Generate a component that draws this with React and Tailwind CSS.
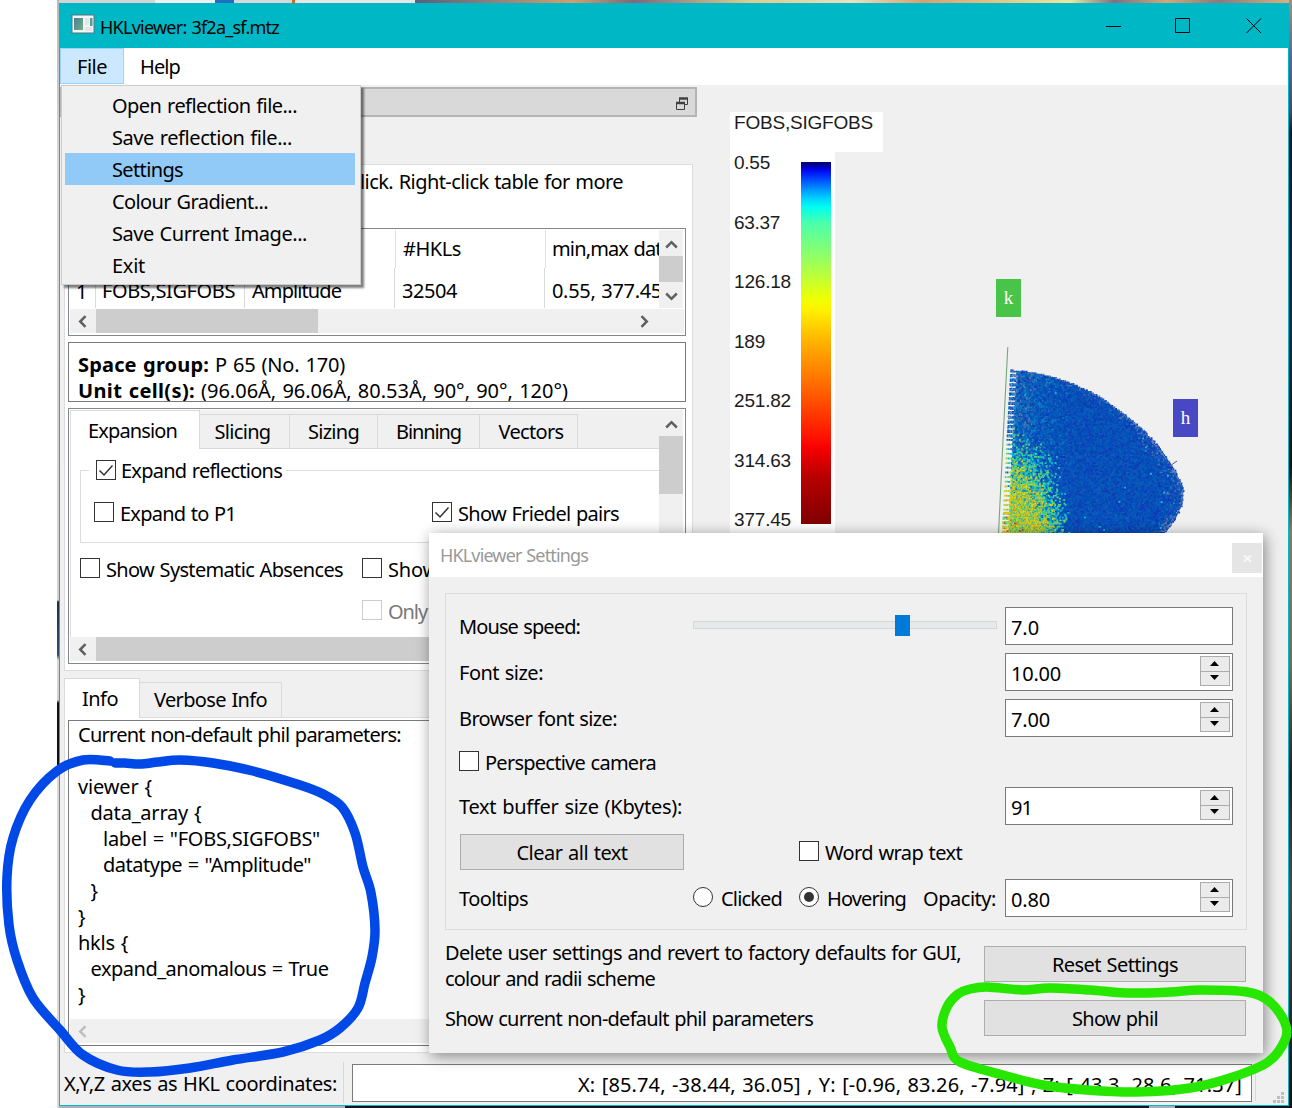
import React, { useLayoutEffect, useMemo, useRef, useState } from "react";

/* Text run whose tracking is adjusted so that it spans a given width. */
function T({ w, flat, className = "", children }) {
  const ref = useRef(null);
  const [gap, setGap] = useState(0);
  useLayoutEffect(() => {
    const el = ref.current;
    el.style.letterSpacing = "0px";
    const natural = el.getBoundingClientRect().width;
    if (w) setGap((w - natural) / el.textContent.length);
  }, [w]);
  return (
    <span
      ref={ref}
      className={`inline-block whitespace-pre [word-spacing:1px] ${flat ? "" : "translate-y-px"} ${className}`}
      style={{ letterSpacing: `${gap}px` }}
    >
      {children}
    </span>
  );
}

function smooth(points, closed) {
  const n = points.length;
  const at = (i) => (closed ? points[(i + n) % n] : points[Math.max(0, Math.min(n - 1, i))]);
  let d = `M${points[0][0]} ${points[0][1]}`;
  for (let i = 0; i < (closed ? n : n - 1); i++) {
    const [p0, p1, p2, p3] = [at(i - 1), at(i), at(i + 1), at(i + 2)];
    d += `C${p1[0] + (p2[0] - p0[0]) / 6} ${p1[1] + (p2[1] - p0[1]) / 6} ${p2[0] - (p3[0] - p1[0]) / 6} ${p2[1] - (p3[1] - p1[1]) / 6} ${p2[0]} ${p2[1]}`;
  }
  return d;
}

function Chevron({ dir, color = "#606060" }) {
  const d = {
    up: "M1.2 8.5 6.5 3.2l5.3 5.3",
    down: "M1.2 4.5 6.5 9.8l5.3-5.3",
    left: "M9.5 1.2 4.2 6.5l5.3 5.3",
    right: "M3.5 1.2 8.8 6.5l-5.3 5.3",
  }[dir];
  return (
    <svg width="13" height="13" viewBox="0 0 13 13" className="block">
      <path d={d} fill="none" stroke={color} strokeWidth="2.5" />
    </svg>
  );
}

function Check({ on, disabled }) {
  return (
    <span className={`flex h-5 w-5 shrink-0 items-center justify-center border bg-white ${disabled ? "border-[#cccccc]" : "border-[#333333]"}`}>
      {on && (
        <svg width="18" height="18" viewBox="0 0 18 18">
          <path d="M2.5 9.5 7 14 15.5 4.500" fill="none" stroke="#333" strokeWidth="1.5" />
        </svg>
      )}
    </span>
  );
}

function Radio({ on }) {
  return (
    <span className="flex h-5 w-5 shrink-0 items-center justify-center rounded-full border border-[#333333] bg-white">
      {on && <span className="h-2.5 w-2.5 rounded-full bg-[#333333]" />}
    </span>
  );
}

function Tab({ active, className, children }) {
  return (
    <div className={`flex items-center justify-center ${active ? "border-x border-t border-[#d9d9d9] bg-white" : "mt-1 border border-l-0 border-[#d9d9d9] bg-[#f0f0f0]"} ${className}`}>
      {children}
    </div>
  );
}

function Spin() {
  return (
    <div className="mr-0.5 mt-0.5 flex h-[30px] w-[30px] flex-col border border-[#acacac] bg-[#ebebeb]">
      <div className="flex h-[15px] justify-center border-b border-[#acacac] pr-px pt-1">
        <svg width="9" height="5" viewBox="0 0 9 5"><path d="M0 5 4.5 0 9 5Z" /></svg>
      </div>
      <div className="flex h-[13px] justify-center pr-px pt-[3px]">
        <svg width="9" height="5" viewBox="0 0 9 5"><path d="M0 0 4.5 5 9 0Z" /></svg>
      </div>
    </div>
  );
}

function Field({ value, w, spin }) {
  return (
    <div className="flex h-[38px] w-[228px] justify-between border border-[#7a7a7a] bg-white pl-[5px]">
      <div className="pt-[7px]"><T flat w={w}>{value}</T></div>
      {spin && <Spin />}
    </div>
  );
}

function Btn({ className, children }) {
  return (
    <div className={`flex h-9 items-center justify-center border border-[#adadad] bg-[#e1e1e1] ${className}`}>{children}</div>
  );
}

const MENU = [
  ["Open reflection file...", 185],
  ["Save reflection file...", 180],
  ["Settings", 71],
  ["Colour Gradient...", 156],
  ["Save Current Image...", 195],
  ["Exit", 33],
];

function FileMenu() {
  return (
    <div className="absolute left-[61px] top-[85px] z-10 h-[200px] w-[300px] border border-[#cccccc] bg-[#f0f0f0] pl-[3px] pt-[3px] shadow-[3px_3px_2px_rgba(0,0,0,0.5)]">
      {MENU.map(([label, w], i) => (
        <div key={label} className={`flex h-8 w-[290px] items-center pl-[47px] ${i === 2 ? "bg-[#91c9f7]" : ""}`}>
          <T w={w}>{label}</T>
        </div>
      ))}
    </div>
  );
}

const OUTLINE = [
  [369, 1012], [371, 1030], [373, 1041], [377, 1056], [382, 1070], [390, 1089], [400, 1106], [412, 1122],
  [429, 1143], [442, 1155], [458, 1167], [472, 1176], [485, 1182], [495, 1183], [505, 1181], [513, 1177], [523, 1171], [534, 1162],
];

function rightEdge(y) {
  for (let i = 1; i < OUTLINE.length; i++) {
    const [y0, x0] = OUTLINE[i - 1];
    const [y1, x1] = OUTLINE[i];
    if (y <= y1) return x0 + ((x1 - x0) * (y - y0)) / (y1 - y0);
  }
  return 1162;
}

/* Reflections drawn as a lattice of small coloured spots, grouped by colour. */
function Reflections() {
  const layers = useMemo(() => {
    let seed = 91;
    const rnd = () => {
      seed = (seed * 1664525 + 1013904223) >>> 0;
      return seed / 4294967296;
    };
    const groups = {};
    const put = (c, x, y, s) => {
      groups[c] = (groups[c] || "") + `M${x.toFixed(1)} ${y.toFixed(1)}h${s}v${s}h-${s}z`;
    };
    const deep = ["#0644b0", "#0650b8", "#0a46c0", "#0058b8", "#0a5abe", "#0b54ac", "#1038b8", "#0862c0"];
    const mid = ["#0070c4", "#0a62be", "#0878c4", "#2a74b8", "#0060b8", "#1484c8"];
    const edge = ["#3c64b4", "#4870b4", "#2048b8", "#1a38b4", "#5c7cb0"];
    const aqua = ["#00c0c8", "#20d0b8", "#18a8d0", "#48d090"];
    const warm = ["#70d068", "#a8d838", "#d8d818", "#48d090", "#e0c010", "#c0d030"];
    const hot = ["#e88010", "#d84010", "#f0a010"];
    const pick = (a) => a[Math.floor(rnd() * a.length)];
    for (let y = 369; y < 534; y += 1.55) {
      const left = 1010 - (y - 369) * 0.052;
      const right = rightEdge(y);
      const comb = Math.floor((y - 369) / 2.3) % 2 === 0;
      for (let x = left + (comb ? 0 : 6); x < right; x += 1.7) {
        const dx = (x - 1003) / 57;
        const dy = (538 - y) / 92;
        const heat = Math.exp(-Math.pow(dx * dx + dy * dy, 1.6)) + (rnd() - 0.5) * 0.45;
        const rim = Math.min(right - x, 30) / 30;
        let c;
        if (heat > 1.14 && rnd() < 0.6) c = pick(hot);
        else if (heat > 0.66) c = pick(warm);
        else if (heat > 0.36) c = pick(aqua.concat(warm.slice(0, 1), mid.slice(0, 2)));
        else if (rnd() < 0.002) c = "#10c0d0";
        else if (rnd() > rim + 0.4 || (x < left + 24 && rnd() < 0.3)) c = pick(edge);
        else if (rnd() < 0.85 - (x - left) / 75) c = pick(mid);
        else c = pick(deep);
        put(c, x + rnd() * 0.6, y + rnd() * 0.4, 1.8);
      }
    }
    return Object.entries(groups);
  }, []);
  const base = `M1018 371${OUTLINE.slice(1).map(([y, x]) => `L${x - 2} ${y + 1}`).join("")}L1009 534Z`;
  return (
    <svg width="230" height="200" viewBox="985 340 230 200" className="absolute left-[288px] top-[255px]">
      <path d={base} fill="#0a5ab8" />
      {layers.map(([c, d]) => <path key={c} d={d} fill={c} />)}
      <path d="M1007.8 347 1003 440 998.5 534" fill="none" stroke="#74a878" strokeWidth="1.1" />
      <path d="M1170.5 465.5 1177 461" stroke="#5a508c" strokeWidth="1" />
    </svg>
  );
}

const SCALE = [["0.55", 36], ["63.37", 46], ["126.18", 57], ["189", 31], ["251.82", 57], ["314.63", 57], ["377.45", 57]];

function Viewer() {
  return (
    <div className="relative w-[591px] pl-[33px] pt-[27px] text-[#1c1c1c]">
      <div className="h-10 w-[153px] bg-white pl-1 font-['Liberation_Sans',sans-serif] text-[19px] leading-[21px]">
        <T flat w={139}>FOBS,SIGFOBS</T>
      </div>
      <div className="flex h-[400px] w-[105px] bg-white pl-1 font-['Liberation_Sans',sans-serif] text-[19px]">
        <div className="w-[67px]">
          {SCALE.map(([s, w]) => <div key={s} className="h-[59.5px] leading-[21px]"><T flat w={w}>{s}</T></div>)}
        </div>
        <div className="mt-2.5 h-[362px] w-[30px] bg-[linear-gradient(#000080_0%,#000090_1%,#0000f0_2%,#0050ff_5%,#00a0ff_8%,#00d0ff_10%,#00ffee_12.5%,#4dffaa_17%,#a0ff58_28%,#f0ff00_38%,#fff000_41%,#ffb000_50%,#ff6800_62%,#ff1800_75%,#f80000_79%,#b80000_87%,#800000_100%)]" />
      </div>
      <Reflections />
      <div className="absolute left-[299px] top-[194px] flex h-[38px] w-[25px] items-center justify-center bg-[#48c548] font-['Liberation_Serif',serif] text-[19px] text-white">k</div>
      <div className="absolute left-[476px] top-[314px] flex h-[38px] w-[25px] items-center justify-center bg-[#4848c5] font-['Liberation_Serif',serif] text-[19px] text-white">h</div>
    </div>
  );
}

function DataPanel() {
  return (
    <div className="ml-1 mt-[47px] h-[507px] w-[629px] border border-[#dcdcdc] bg-white pl-[3px]">
      <div className="flex h-[63px] pl-[292px] pt-[3px]"><T w={263}>lick. Right-click table for more</T></div>

      <div className="flex h-[108px] w-[618px] flex-col border border-[#828790] bg-white pt-px">
        <div className="flex h-[78px]">
          <div className="flex w-[590px] flex-col overflow-hidden">
            <div className="flex h-[38px] shrink-0">
              <div className="w-[177px] shrink-0 border-r border-[#e0e0e0]" />
              <div className="w-[150px] shrink-0 border-r border-[#e0e0e0]" />
              <div className="w-[150px] shrink-0 border-r border-[#e0e0e0] pl-[7px] pt-[5px]"><T w={58}>#HKLs</T></div>
              <div className="shrink-0 pl-[6px] pt-[5px]"><T w={120}>min,max data</T></div>
            </div>
            <div className="flex h-10 shrink-0">
              <div className="w-[27px] shrink-0 border-r border-[#d9d9d9] pl-[7px] pt-[11px]">1</div>
              <div className="w-[149px] shrink-0 border-r border-[#d9d9d9] pl-[6px] pt-[9px]"><T w={133}>FOBS,SIGFOBS</T></div>
              <div className="w-[150px] shrink-0 border-r border-[#d9d9d9] pl-[7px] pt-[9px]"><T w={89}>Amplitude</T></div>
              <div className="w-[150px] shrink-0 border-r border-[#d9d9d9] pl-[7px] pt-[9px]"><T w={55}>32504</T></div>
              <div className="shrink-0 pl-[7px] pt-[9px]"><T w={110}>0.55, 377.45</T></div>
            </div>
          </div>
          <div className="flex w-6 shrink-0 flex-col items-center bg-[#f0f0f0]">
            <div className="flex h-[26px] items-center pt-1"><Chevron dir="up" /></div>
            <div className="h-[26px] w-6 bg-[#cdcdcd]" />
            <div className="flex h-[26px] items-center"><Chevron dir="down" /></div>
          </div>
        </div>
        <div className="ml-px mt-px flex h-6 w-[614px] items-center justify-between bg-[#f0f0f0]">
          <div className="flex h-6 items-center">
            <div className="w-[26px] pl-[6px]"><Chevron dir="left" /></div>
            <div className="h-6 w-[222px] bg-[#cdcdcd]" />
          </div>
          <div className="pr-[33px]"><Chevron dir="right" /></div>
        </div>
      </div>

      <div className="mt-1.5 h-[60px] w-[618px] overflow-hidden border border-[#7a7a7a] bg-white pl-[9px] pt-[8px]">
        <div className="h-[26px]"><T w={131} className="font-bold">Space group:</T><T w={6}> </T><T w={130}>P 65 (No. 170)</T></div>
        <div className="h-[26px]"><T w={117} className="font-bold">Unit cell(s):</T><T w={6}> </T><T w={367}>(96.06Å, 96.06Å, 80.53Å, 90°, 90°, 120°)</T></div>
      </div>

      <div className="mt-1.5 flex h-[256px] w-[618px] flex-col border border-[#828790] bg-white px-px pt-px">
        <div className="flex h-[227px]">
          <div className="w-[589px] overflow-hidden border-l border-[#dcdcdc]">
            <div className="flex h-[39px] bg-[#f0f0f0]">
              <Tab active className="w-[129px] border-l-0 pr-[5px]"><T w={89}>Expansion</T></Tab>
              <Tab className="w-[90px] pr-1"><T flat w={56}>Slicing</T></Tab>
              <Tab className="w-[88px]"><T flat w={51}>Sizing</T></Tab>
              <Tab className="w-[102px]"><T flat w={65}>Binning</T></Tab>
              <Tab className="w-[98px] pl-[5px]"><T flat w={65}>Vectors</T></Tab>
              <div className="grow border-b border-[#d9d9d9]" />
            </div>
            <div className="relative ml-[9px] mt-[21px] h-[73px] w-[620px] border border-[#dcdcdc]">
              <div className="absolute -top-[14px] left-2 flex h-[26px] items-center gap-[5px] bg-white pl-[7px] pr-1">
                <Check on /><T w={161}>Expand reflections</T>
              </div>
              <div className="flex pl-[13px] pt-[31px]">
                <div className="flex w-[338px] gap-1.5"><Check /><T w={116} className="-mt-0.5">Expand to P1</T></div>
                <div className="flex gap-1.5"><Check on /><T w={161} className="-mt-0.5">Show Friedel pairs</T></div>
              </div>
            </div>
            <div className="mt-[12px] flex h-[26px] items-center pl-[9px]">
              <div className="flex w-[282px] items-center gap-1.5"><Check /><T w={237} className="pt-0.5">Show Systematic Absences</T></div>
              <div className="flex items-center gap-1.5"><Check /><T w={50} className="pt-0.5">Show</T></div>
            </div>
            <div className="mt-4 flex h-[26px] items-center gap-1.5 pl-[291px] text-[#787878]"><Check disabled /><T w={39} className="pt-0.5">Only</T></div>
          </div>
          <div className="flex w-6 flex-col items-center bg-[#f0f0f0]">
            <div className="flex h-[26px] items-center pt-1"><Chevron dir="up" /></div>
            <div className="h-[58px] w-6 bg-[#cdcdcd]" />
          </div>
        </div>
        <div className="flex h-6 w-[589px] items-center bg-[#f0f0f0]">
          <div className="w-[26px] pl-[6px]"><Chevron dir="left" /></div>
          <div className="h-6 grow bg-[#cdcdcd]" />
        </div>
      </div>
    </div>
  );
}

const PHIL = [
  ["Current non-default phil parameters:", 323, ""],
  ["", 0, ""],
  ["viewer {", 74, ""],
  ["data_array {", 111, "pl-[12.500px]"],
  ['label = "FOBS,SIGFOBS"', 217, "pl-[25px]"],
  ['datatype = "Amplitude"', 208, "pl-[25px]"],
  ["}", 10, "pl-[12.500px]"],
  ["}", 10, ""],
  ["hkls {", 50, ""],
  ["expand_anomalous = True", 238, "pl-[12.500px]"],
  ["}", 10, ""],
];

function InfoPanel() {
  return (
    <div className="ml-1 mt-[7px] w-[629px]">
      <div className="flex h-[39px]">
        <Tab active className="-mb-px w-[76px] pr-1"><T flat w={36}>Info</T></Tab>
        <Tab className="w-[142px] border-b-0"><T flat w={113}>Verbose Info</T></Tab>
      </div>
      <div className="h-[336px] border border-[#dcdcdc] bg-white pl-[3px] pt-0.5">
        <div className="h-[326px] w-[618px] border border-[#7a7a7a] bg-white">
          <div className="h-[298px] pl-[9px]">
            {PHIL.map(([line, w, pad], i) => <div key={i} className={`h-[26px] ${pad}`}>{line && <T w={w}>{line}</T>}</div>)}
          </div>
          <div className="mx-px flex h-6 items-center bg-[#f0f0f0] pl-[6px]"><Chevron dir="left" color="#bfbfbf" /></div>
        </div>
      </div>
    </div>
  );
}

function StatusBar() {
  return (
    <div className="flex h-[52px] items-start pl-1 pt-[10px]">
      <div className="w-[279px] pt-[8px]"><T flat w={273}>X,Y,Z axes as HKL coordinates:</T></div>
      <div className="mt-[-1px] h-[41px] w-[9px] border-l border-[#d7d7d7]" />
      <div className="mt-px flex h-[38px] w-[900px] justify-end border border-[#7a7a7a] bg-white pr-[9px] pt-[7px]">
        <T flat w={664}>X: [85.74, -38.44, 36.05] , Y: [-0.96, 83.26, -7.94] , Z: [-43.3, 28.6, 71.37]</T>
      </div>
      <div className="ml-[3px] h-[38px] border-l border-[#d7d7d7]" />
      <svg width="12" height="12" viewBox="0 0 12 12" className="ml-[17px] mt-[29px]" fill="#bfbfbf">
        <path d="M8 0h3v3h-3zM4 4h3v3h-3zM8 4h3v3h-3zM0 8h3v3h-3zM4 8h3v3h-3zM8 8h3v3h-3z" />
      </svg>
    </div>
  );
}

function Row({ label, w, children, className = "h-[46px]" }) {
  return (
    <div className={`flex items-center justify-between ${className}`}>
      <T w={w}>{label}</T>
      {children}
    </div>
  );
}

function SettingsDialog() {
  return (
    <div className="absolute left-[429px] top-[533px] z-20 h-[520px] w-[834px] bg-[#f0f0f0] shadow-[2px_3px_14px_rgba(0,0,0,0.45)]">
      <div className="flex h-11 justify-between bg-white pl-[11px] pr-px pt-[10px]">
        <T flat w={148} className="-mt-px text-[18px] text-[#999999]">HKLviewer Settings</T>
        <div className="flex h-[30px] w-[30px] items-center justify-center bg-[#e5e5e5]">
          <svg width="9" height="7" viewBox="0 0 9 7"><path d="M1 .3 8 6.7M8 .3 1 6.7" stroke="#f8f8f8" strokeWidth="2" /></svg>
        </div>
      </div>
      <div className="ml-4 mt-4 h-[337px] w-[802px] border border-[#dcdcdc] pl-[13px] pr-[13px] pt-[9px]">
        <Row label="Mouse speed:" w={121}>
          <div className="flex gap-2">
            <div className="relative mt-[14px] h-2 w-[304px] border border-[#d6d6d6] bg-[#e7eaea]">
              <div className="absolute -top-[7px] left-[201px] h-[21px] w-[15px] bg-[#007ad9]" />
            </div>
            <Field value="7.0" w={28} />
          </div>
        </Row>
        <Row label="Font size:" w={84}><Field value="10.00" w={50} spin /></Row>
        <Row label="Browser font size:" w={158}><Field value="7.00" w={39} spin /></Row>
        <div className="flex h-[42px] items-center gap-1.5"><span className="-mt-0.5"><Check /></span><T w={171}>Perspective camera</T></div>
        <Row label="Text buffer size (Kbytes):" w={223}><Field value="91" w={21} spin /></Row>
        <div className="flex h-[46px] items-center pl-px">
          <Btn className="w-[224px]"><T w={111}>Clear all text</T></Btn>
          <div className="ml-[115px] flex items-center gap-1.5"><span className="-mt-0.5"><Check /></span><T w={137}>Word wrap text</T></div>
        </div>
        <div className="flex h-[46px] items-center">
          <div className="w-[234px]"><T w={69}>Tooltips</T></div>
          <span className="-mt-0.5"><Radio /></span>
          <div className="w-[86px] pl-2"><T w={61}>Clicked</T></div>
          <span className="-mt-0.5"><Radio on /></span>
          <div className="w-[104px] pl-2"><T w={79}>Hovering</T></div>
          <div className="w-[82px]"><T w={73}>Opacity:</T></div>
          <Field value="0.80" w={39} spin />
        </div>
      </div>
      <div className="flex justify-between pl-4 pr-[17px] pt-[9px]">
        <div><T w={516}>Delete user settings and revert to factory defaults for GUI,</T><br /><T w={210}>colour and radii scheme</T></div>
        <Btn className="mt-[7px] w-[262px]"><T w={126}>Reset Settings</T></Btn>
      </div>
      <div className="flex items-center justify-between pl-4 pr-[17px] pt-[9px]">
        <T w={368}>Show current non-default phil parameters</T>
        <Btn className="w-[262px]"><T w={86}>Show phil</T></Btn>
      </div>
    </div>
  );
}

const BLUE = [[115, 763], [125, 763], [140, 764], [158, 762], [180, 760], [213, 763], [253, 771], [300, 785], [323, 794], [342, 807], [355, 833], [363, 867], [371, 893], [375, 930], [372, 957], [365, 983], [358, 1008], [340, 1028], [320, 1040], [283, 1052], [233, 1060], [190, 1068], [150, 1072], [117, 1070], [83, 1055], [60, 1030], [33, 998], [17, 960], [9, 925], [7, 877], [13, 838], [30, 800], [57, 771], [83, 760], [110, 761]];
const GREEN = [[958, 994], [970, 989], [987, 987], [1023, 990], [1050, 988], [1090, 990], [1127, 993], [1170, 992], [1200, 990], [1247, 992], [1270, 1002], [1285, 1023], [1285, 1040], [1268, 1062], [1233, 1077], [1190, 1088], [1137, 1092], [1087, 1090], [1043, 1085], [1003, 1075], [960, 1062], [950, 1047], [942, 1027], [947, 1007]];

function Annotations() {
  return (
    <svg width="1292" height="1108" viewBox="0 0 1292 1108" className="pointer-events-none absolute left-0 top-0 z-30" fill="none" strokeLinecap="round" strokeLinejoin="round">
      <path d={smooth(BLUE, false)} stroke="#0049e6" strokeWidth="9.5" />
      <path d={smooth(GREEN, true)} stroke="#27e600" strokeWidth="9.5" />
    </svg>
  );
}

export default function App() {
  return (
    <div className="relative flex h-[1108px] w-[1292px] overflow-hidden bg-white font-['Noto_Sans',sans-serif] text-[20px] leading-[26px] text-black">
      <div className="w-[57px]" />
      <div className="w-[2px] bg-[linear-gradient(#b8b8b8_0px,#d8d8d8_160px,#d0d0d0_600px,#1c3048_602px,#30506a_655px,#d8d8d8_660px,#d0d0d0_700px,#101010_703px,#101010_765px,#d8d8d8_768px)]" />
      <div className="flex w-[1230px] flex-col">
        <div className="flex h-[3px]">
          <div className="w-[96px] bg-[#d4d4d4]" />
          <div className="w-[60px] bg-[#efefef]" />
          <div className="w-[19px] bg-[#1e6fc0]" />
          <div className="w-[58px] bg-[#d8d8d8]" />
          <div className="w-[3px] bg-[#e06020]" />
          <div className="w-[120px] bg-[#e6e6e6]" />
          <div className="grow bg-[linear-gradient(90deg,#556080,#d0a070_18%,#806878_25%,#d8cc90_38%,#e8e0c0_50%,#d8a070_58%,#e8e8a0_75%,#807080_80%,#d0a878_86%,#907878_92%,#d8b080)]" />
        </div>
        <div className="flex h-[45px] items-center bg-[#00b7c6] pl-3">
          <svg width="24" height="20" viewBox="0 0 24 20" className="-mt-1">
            <rect x="1" y="1" width="22" height="18" fill="#f4f4f4" stroke="#55777c" />
            <defs><linearGradient id="pane" x1="0" y1="0" x2="1" y2="1"><stop offset="0" stopColor="#4a7d9c" /><stop offset="1" stopColor="#6db37f" /></linearGradient></defs>
            <rect x="3" y="4" width="9" height="12" fill="url(#pane)" />
            <rect x="14" y="4" width="4" height="7" fill="#dfe7e7" />
            <rect x="19" y="4" width="2.5" height="8" fill="#5b9a93" />
            <rect x="14" y="13" width="7" height="4" fill="#e6e6e6" />
          </svg>
          <T flat w={179} className="ml-[5px] pt-0.5 text-[18px]">HKLviewer: 3f2a_sf.mtz</T>
          <div className="grow" />
          <svg width="156" height="16" viewBox="0 0 156 16" className="mr-[27px]" fill="none" stroke="#000" strokeWidth="1">
            <path d="M0 8.5h15M69.5.5h14v14h-14zM140.5.5l14.5 14.5M155 .5l-14.5 14.5" />
          </svg>
        </div>
        <div className="flex h-[1058px] flex-col border-x border-b border-[#00b7c6] bg-[#f0f0f0]">
          <div className="flex h-[37px] bg-white">
            <div className="flex h-9 w-16 justify-center border border-[#99d1ff] bg-[#cce8ff] pt-[5px]"><T flat w={30}>File</T></div>
            <div className="pl-4 pt-[6px]"><T flat w={40}>Help</T></div>
          </div>
          <div className="flex h-[968px]">
            <div className="w-[637px] pt-0.5">
              <div className="flex h-[30px] items-center justify-end border-2 border-[#b4b4b4] bg-[#d9d9d9] pr-[7px] pt-0.5">
                <svg width="12" height="13" viewBox="0 0 12 13" fill="none" stroke="#404040">
                  <path d="M3.5 5V1.5h8v6h-3" /><path d="M3 1.5h9" strokeWidth="2.5" />
                  <path d="M.5 5.5h8v7h-8z" fill="#d9d9d9" /><path d="M0 6h9" strokeWidth="2.5" />
                </svg>
              </div>
              <DataPanel />
              <InfoPanel />
            </div>
            <Viewer />
          </div>
          <StatusBar />
        </div>
        <div className="flex h-[2px]">
          <div className="w-[286px] bg-[#a8b4b8]" />
          <div className="w-[804px] bg-[#10181c]" />
          <div className="w-[26px] bg-[#a0b4b8]" />
          <div className="grow bg-[#10181c]" />
        </div>
      </div>
      <div className="w-[3px] bg-[linear-gradient(#a09080,#60688a_5%,#4a4a60_10%,#101828_12%,#182840_30%,#101010_42%,#907868_48%,#786860_60%,#202020_70%,#504848_80%,#101010)]" />
      <FileMenu />
      <SettingsDialog />
      <Annotations />
    </div>
  );
}
